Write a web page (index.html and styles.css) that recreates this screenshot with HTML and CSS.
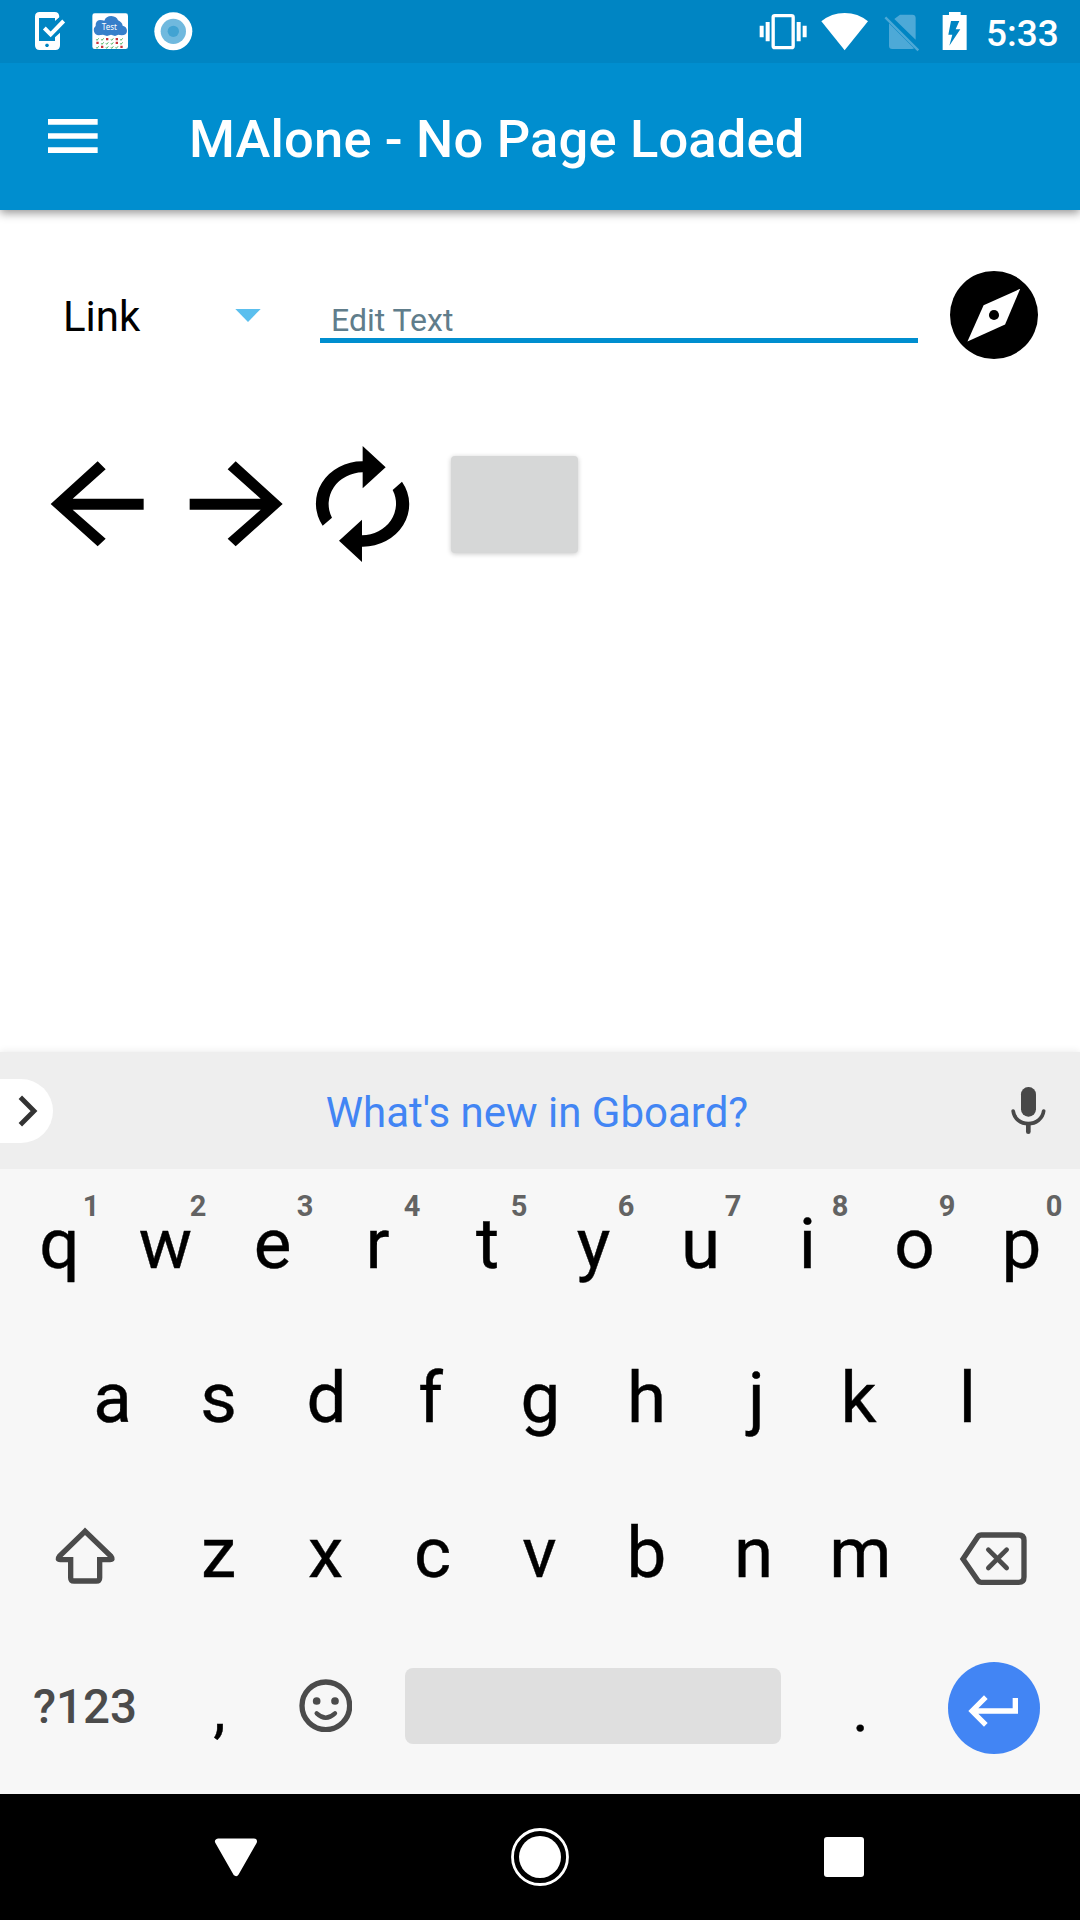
FILE: index.html
```html
<!DOCTYPE html>
<html lang="en">
<head>
<meta charset="utf-8">
<title>MAlone</title>
<link rel="stylesheet" href="styles.css">
</head>
<body>
<div class="screen">
  <header class="status">
    <svg class="status-left" viewBox="0 0 600 189">
      <path fill="#fff" d="M119 36H164Q178 36 178 52L165 63V54H117V123H165V112L180 98V136Q180 150 166 150H119Q105 150 105 136V50Q105 36 119 36Z"/>
      <path fill="none" stroke="#0085c3" stroke-width="8" d="M166 70L182 55"/>
      <path fill="none" stroke="#fff" stroke-width="12" d="M133 84L152 103L191 63"/>
      <path fill="#0085c3" d="M138 131H144L147 136L144 141H138L135 136Z"/>
      <rect x="277" y="41" width="107" height="107" rx="8" fill="#0a5f8d" opacity=".5"/>
      <rect x="277" y="40" width="107" height="107" rx="7" fill="#fff"/>
      <path fill="#367fca" d="M296 106A16 16 0 0 1 287 78Q286 62 300 60Q308 60 313 62Q318 48 334 48Q350 49 354 61Q366 66 368 77Q381 80 381 93Q380 106 365 106L355 104L345 108L333 104L321 108L309 104Z"/>
      <text class="cloud-text" x="328" y="91" text-anchor="middle">Test</text>
      <g fill="none" stroke="#2ba143" stroke-width="2.500">
        <path d="M289 118L291 121L296 115M318 130L320 133L325 127M304 118L306 121L311 115M333 118L335 121L340 115M361 118L363 121L368 115M304 130L306 133L311 127M333 130L335 133L340 127M361 130L363 133L368 127M289 142L291 145L296 139M318 142L320 145L325 139M333 142L335 145L340 139M347 142L349 145L354 139"/>
      </g>
      <path fill="#c9343c" d="M318 114h7v7h-7zM347 114h7v7h-7zM289 125h7v7h-7zM347 125h7v7h-7zM303 137h7v7h-7zM361 137h7v7h-7z"/>
      <circle cx="520" cy="94" r="57" fill="#fff"/>
      <circle cx="520" cy="94" r="38" fill="#70b9de"/>
      <circle cx="520" cy="94" r="17" fill="#42a3d2"/>
    </svg>
    <svg class="status-right" viewBox="100 0 680 189">
      <rect x="160.500" y="47" width="60" height="96" rx="5" fill="none" stroke="#fff" stroke-width="10"/>
      <path fill="#fff" d="M120 77h12v35h-12zM138 66h12v58h-12zM231 66h12v58h-12zM249 77h12v35h-12z"/>
      <path fill="#fff" d="M305 64Q335 39 375 39Q415 39 445 64L375 151Z"/>
      <path fill="#4da9d7" d="M541 44H578Q588 44 588 54V119L524 57ZM508 70L583 145Q581 147 577 147H518Q508 147 508 137Z"/>
      <path fill="none" stroke="#4da9d7" stroke-width="7" d="M497 52L596 151"/>
      <path fill="#fff" d="M688 36H723V45H741V150H669V45H688Z"/>
      <path fill="#0085c3" d="M694 63H719L708 88H722L689 137L698 104H686Z"/>
    </svg>
    <span class="clock">5:33</span>
  </header>

  <div class="appbar">
    <svg class="menu" viewBox="0 0 150 102"><path fill="#fff" d="M0 0h149v17H0zM0 42.500h149v17H0zM0 85h149v17H0z"/></svg>
    <h1 class="title">MAlone - No Page Loaded</h1>
  </div>

  <main class="content">
    <div class="address">
      <div class="picker">
        <span>Link</span>
        <svg class="caret" viewBox="0 0 78 40"><path fill="#5bbfee" d="M0 0H78L39 40Z"/></svg>
      </div>
      <div class="field">Edit Text</div>
      <svg class="compass" viewBox="210 92 262 262">
        <circle cx="341" cy="223" r="131"/>
        <path fill="#fff" d="M419 145L374 251L262 302L310 194Z"/>
        <circle cx="341" cy="223" r="15"/>
      </svg>
    </div>
    <div class="tools">
      <svg class="tool-icons" viewBox="150 612 1082 360">
        <path d="M152 792L293 664L317 688L218 776H431V809H218L317 896L293 919Z"/>
        <path d="M848 792L707 664L683 688L782 776H569V809H782L683 896L707 919Z"/>
        <path d="M1088 664A139 127 0 0 0 968 857L996 833A103 95 0 0 1 1088 697V745L1157 682L1088 618Z"/>
        <path d="M1086 920A139 127 0 0 0 1206 725L1178 750A103 95 0 0 1 1086 886V839L1017 902L1086 966Z"/>
      </svg>
      <div class="button"></div>
    </div>
  </main>

  <section class="keyboard">
    <div class="suggest">
      <div class="expand">
        <svg class="chevron" viewBox="52 165 60 96"><path fill="none" stroke="#333" stroke-width="14.500" d="M59 172L100 213L59 254"/></svg>
      </div>
      <span class="suggestion">What's new in Gboard?</span>
      <svg class="mic" viewBox="690 138 110 146">
        <rect x="723" y="141" width="45" height="89" rx="22" fill="#484848"/>
        <path fill="none" stroke="#484848" stroke-width="11" stroke-linecap="round" d="M699.500 213C702 236 722 251 745 251S788 236 791 213"/>
        <path fill="none" stroke="#484848" stroke-width="14" stroke-linecap="round" d="M745 254V275"/>
      </svg>
    </div>
    <div class="row row-top">
      <div class="key lean-right">q<sup class="hint">1</sup></div>
      <div class="key">w<sup class="hint">2</sup></div>
      <div class="key">e<sup class="hint">3</sup></div>
      <div class="key lean-left">r<sup class="hint">4</sup></div>
      <div class="key lean-right">t<sup class="hint">5</sup></div>
      <div class="key">y<sup class="hint">6</sup></div>
      <div class="key">u<sup class="hint">7</sup></div>
      <div class="key">i<sup class="hint">8</sup></div>
      <div class="key">o<sup class="hint">9</sup></div>
      <div class="key">p<sup class="hint">0</sup></div>
    </div>
    <div class="row row-home">
      <div class="key lean-right">a</div><div class="key">s</div><div class="key lean-right">d</div><div class="key lean-left">f</div><div class="key lean-right">g</div><div class="key">h</div><div class="key tail">j</div><div class="key lean-left">k</div><div class="key">l</div>
    </div>
    <div class="row row-low">
      <div class="key wide">
        <svg class="full-key" viewBox="0 -6 495 450"><path fill="none" stroke="#4b4b4b" stroke-width="16" d="M255 154L178 229Q170 239 181 239H212V293Q212 303 222 303H289Q299 303 299 293V239H330Q341 239 333 229Z"/></svg>
      </div>
      <div class="key">z</div><div class="key">x</div><div class="key">c</div><div class="key">v</div><div class="key">b</div><div class="key">n</div><div class="key">m</div>
      <div class="key wide">
        <svg class="full-key" viewBox="645 -6 495 450">
          <path fill="none" stroke="#4b4b4b" stroke-width="16" d="M844 165H956Q972 165 972 181V291Q972 307 956 307H844Q837 307 833 301L789 237L833 171Q837 165 844 165Z"/>
          <path fill="none" stroke="#4b4b4b" stroke-width="14" stroke-linecap="round" d="M865 209L920 264M920 209L865 264"/>
        </svg>
      </div>
    </div>
    <div class="row row-bottom">
      <div class="key wide symbols">?123</div>
      <div class="key mark lean-right">,</div>
      <div class="key">
        <svg class="emoji" viewBox="896 596 161 161">
          <circle cx="976.500" cy="676.500" r="71.500" fill="none" stroke="#4b4b4b" stroke-width="16"/>
          <circle cx="949" cy="662" r="11.500" fill="#4b4b4b"/><circle cx="1004" cy="662" r="11.500" fill="#4b4b4b"/>
          <path fill="none" stroke="#4b4b4b" stroke-width="13" stroke-linecap="round" d="M949 699Q976 725 1004 699"/>
        </svg>
      </div>
      <div class="space"></div>
      <div class="key mark">.</div>
      <div class="enter">
        <svg class="return" viewBox="744 546 276 276"><path fill="#fff" d="M805 693L852 646L863 657L835 685H938V654H954V701H835L863 729L852 740Z"/></svg>
      </div>
    </div>
  </section>

  <nav class="navbar">
    <svg class="nav-icons" viewBox="0 0 1080 126">
      <path fill="#fff" stroke="#fff" stroke-width="6" stroke-linejoin="round" d="M218 47.500H254L236 79Z"/>
      <circle cx="540" cy="63" r="27.500" fill="none" stroke="#fff" stroke-width="2.800"/>
      <circle cx="540" cy="63" r="21" fill="#fff"/>
      <rect x="824" y="43" width="40" height="40" rx="3" fill="#fff"/>
    </svg>
  </nav>
</div>
</body>
</html>
```
FILE: styles.css
```css
* { box-sizing: border-box; }
body { margin: 0; background: #fff; font-family: Roboto, sans-serif; }
svg { display: block; flex: none; }
.screen { width: 1080px; height: 1920px; display: flex; flex-direction: column; overflow: hidden; }

.status { height: 63px; flex: none; display: flex; background: #0085c3; color: #fff; z-index: 2; }
.status-left { width: 200px; height: 63px; }
.status-right { width: 226.67px; height: 63px; margin-left: 553.33px; }
.cloud-text { font-size: 24px; fill: #fff; font-family: "Noto Sans", sans-serif; }
.clock { margin-left: 6px; font-size: 37px; font-weight: 500; line-height: 67px; white-space: nowrap; }

.appbar { height: 147px; flex: none; display: flex; background: #008ecf; color: #fff; z-index: 1; box-shadow: 0 3px 9px rgba(0, 0, 0, .42); }
.menu { width: 50px; height: 34px; margin: 56px 0 0 48px; }
.title { margin: 0 0 0 91px; font-size: 52.5px; font-weight: 500; line-height: 152px; letter-spacing: .16px; white-space: nowrap; }

.content { flex: 1; display: flex; flex-direction: column; }
.address { display: flex; height: 133px; padding-top: 60px; }
.picker { display: flex; width: 320px; padding-left: 63px; font-size: 42px; line-height: 93px; color: #000; justify-content: space-between; padding-right: 59px; }
.caret { width: 26px; height: 13px; margin-top: 39px; }
.field { width: 598px; height: 73px; padding-left: 11px; border-bottom: 5.5px solid #008ecf; font-size: 32px; line-height: 101px; color: #607d8b; }
.compass { width: 88px; height: 88px; margin-left: 31.5px; margin-top: .5px; filter: blur(.6px); }
.tools { display: flex; margin-top: 101px; padding-left: 50px; }
.tool-icons { width: 360.67px; height: 120px; filter: blur(.7px); }
.button { width: 127px; height: 97px; margin: 12px 0 0 40.33px; border-radius: 4px; background: #d6d7d7; box-shadow: 0 1px 5px rgba(0, 0, 0, .22); }

.keyboard { height: 742px; flex: none; background: #f7f7f7; box-shadow: 0 -1px 7px rgba(0, 0, 0, .08); }
.suggest { height: 117px; display: flex; background: #eee; }
.expand { width: 52.5px; height: 64px; margin-top: 27px; padding: 16px 0 0 17.5px; background: #fff; border-radius: 0 32px 32px 0; }
.chevron { width: 20px; height: 32px; }
.suggestion { width: 430px; margin-left: 269.5px; text-align: center; color: #4285f4; font-size: 42px; line-height: 122px; white-space: nowrap; }
.mic { width: 36.67px; height: 48.67px; margin: 34px 0 0 258px; }

.row { display: flex; height: 154px; font-size: 71px; line-height: 150px; color: #000; }
.key { position: relative; width: 107px; height: 150px; text-align: center; -webkit-text-stroke: .4px currentColor; }
.wide { width: 165px; }
.hint { position: absolute; left: 64px; top: 17px; width: 44px; font-size: 29px; font-weight: 700; line-height: 40px; color: #636363; -webkit-text-stroke: 0; }
.row-top { padding-left: 5px; }
.row-home { height: 155px; padding-left: 58px; }

/* Glyphs whose side bearings are uneven are nudged to sit centred on the key. */
.lean-left { text-indent: -4px; }
.lean-right { text-indent: 2px; }
.tail { text-indent: 6px; }
.hint { text-indent: 0; }

.full-key { width: 165px; height: 150px; }
.row-low .wide:last-child { margin-left: 1px; }
.row-bottom { height: 162px; }
.symbols { width: 165px; padding-left: 5px; font-size: 47.5px; font-weight: 500; color: #4b4b4b; -webkit-text-stroke: 0; }
.mark { font-size: 63px; line-height: 156px; }
.emoji { width: 53.67px; height: 53.67px; margin: 46.5px auto 0; }
.space { width: 376px; height: 76px; margin: 36px 26px 0 26px; border-radius: 8px; background: #dfdfdf; }
.enter { width: 92px; height: 92px; margin: 30px 0 0 34px; border-radius: 50%; background: #4285f4; }
.return { width: 92px; height: 92px; }

.navbar { height: 126px; flex: none; background: #000; }
.nav-icons { width: 1080px; height: 126px; }
```
